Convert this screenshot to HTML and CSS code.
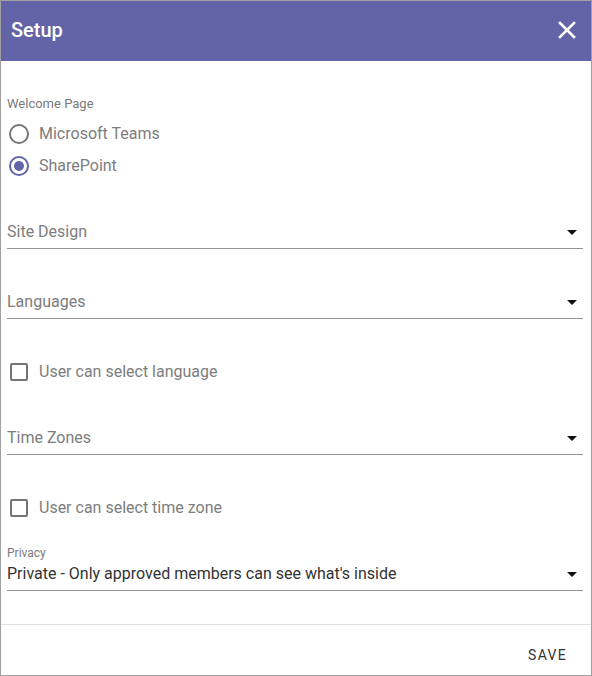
FILE: index.html
```html
<!DOCTYPE html>
<html>
<head>
<meta charset="utf-8">
<link rel="stylesheet" href="styles.css">
</head>
<body>
<div class="dialog">
  <div class="header">
    <span class="title">Setup</span>
    <svg class="close" width="18" height="18" viewBox="0 0 18 18"><path d="M2 2 L16 16 M16 2 L2 16" stroke="#fff" stroke-width="2.6" stroke-linecap="square"/></svg>
  </div>
  <div class="content">
    <div class="group-label">Welcome Page</div>
    <div class="radios">
      <div class="row"><span class="radio"></span><span class="opt">Microsoft Teams</span></div>
      <div class="row"><span class="radio checked"></span><span class="opt">SharePoint</span></div>
    </div>
    <div class="field f-site"><span class="placeholder">Site Design</span><span class="arrow"></span></div>
    <div class="field f-lang"><span class="placeholder">Languages</span><span class="arrow"></span></div>
    <div class="row check-row c1"><span class="checkbox"></span><span class="opt">User can select language</span></div>
    <div class="field f-tz"><span class="placeholder">Time Zones</span><span class="arrow"></span></div>
    <div class="row check-row c2"><span class="checkbox"></span><span class="opt">User can select time zone</span></div>
    <div class="privacy">
      <div class="small-label">Privacy</div>
      <div class="field f-priv"><span class="value">Private - Only approved members can see what's inside</span><span class="arrow"></span></div>
    </div>
  </div>
  <div class="footer">
    <span class="save">SAVE</span>
  </div>
</div>
</body>
</html>
```
FILE: styles.css
```css
html, body {
  margin: 0;
  padding: 0;
  background: #fff;
}
body {
  font-family: Roboto, "Liberation Sans", sans-serif;
}
.dialog {
  width: 592px;
  height: 676px;
  box-sizing: border-box;
  border: 1px solid #a0a0a0;
  display: flex;
  flex-direction: column;
}
.header {
  height: 60px;
  background: #6264a7;
  display: flex;
  align-items: center;
  justify-content: space-between;
  padding: 0 15px 0 10px;
  flex: none;
}
.title {
  color: #fff;
  font-size: 20px;
  font-weight: 500;
  line-height: 24px;
  margin-top: -3px;
}
.close {
  display: block;
  margin-top: -3px;
}
.content {
  flex: 1;
  padding: 35px 8px 0 6px;
  display: flex;
  flex-direction: column;
}
.group-label {
  font-size: 13px;
  line-height: 16px;
  color: #7a7a7a;
}
.radios {
  margin-top: 6px;
  display: flex;
  flex-direction: column;
}
.row {
  height: 32px;
  display: flex;
  align-items: center;
}
.radio {
  width: 20px;
  height: 20px;
  box-sizing: border-box;
  border: 2px solid #757575;
  border-radius: 50%;
  margin-left: 2px;
  margin-right: 10px;
  position: relative;
  flex: none;
}
.radio.checked {
  border-color: #6264a7;
}
.radio.checked::after {
  content: "";
  position: absolute;
  left: 3px;
  top: 3px;
  width: 10px;
  height: 10px;
  border-radius: 50%;
  background: #6264a7;
}
.opt {
  font-size: 16px;
  font-weight: 400;
  color: #7d7d7d;
  line-height: 24px;
}
.checkbox {
  width: 18px;
  height: 18px;
  box-sizing: border-box;
  border: 2px solid #757575;
  border-radius: 2px;
  margin-left: 3px;
  margin-right: 11px;
  flex: none;
}
.field {
  display: flex;
  align-items: center;
  justify-content: space-between;
  padding: 5px 6px 4px 0;
  border-bottom: 1px solid #949494;
}
.f-site { margin-top: 33px; }
.f-lang { margin-top: 36px; }
.c1 { margin-top: 37px; }
.f-tz { margin-top: 33px; }
.c2 { margin-top: 37px; }
.privacy { margin-top: 21px; }
.placeholder {
  font-size: 16px;
  font-weight: 400;
  line-height: 24px;
  color: #7d7d7d;
}
.value {
  font-size: 16px;
  line-height: 24px;
  color: #333;
}
.small-label {
  font-size: 12px;
  line-height: 16px;
  color: #7a7a7a;
}
.f-priv {
  padding-top: 1px;
}
.arrow {
  width: 0;
  height: 0;
  border-left: 5px solid transparent;
  border-right: 5px solid transparent;
  border-top: 5px solid #111;
  margin-top: 0;
}
.footer {
  height: 50px;
  flex: none;
  border-top: 1px solid #e0e0e0;
  display: flex;
  align-items: center;
  justify-content: flex-end;
  padding: 0 24px 0 0;
}
.save {
  font-size: 14px;
  font-weight: 400;
  letter-spacing: 1.3px;
  color: #333;
  margin-top: 10px;
}
```
